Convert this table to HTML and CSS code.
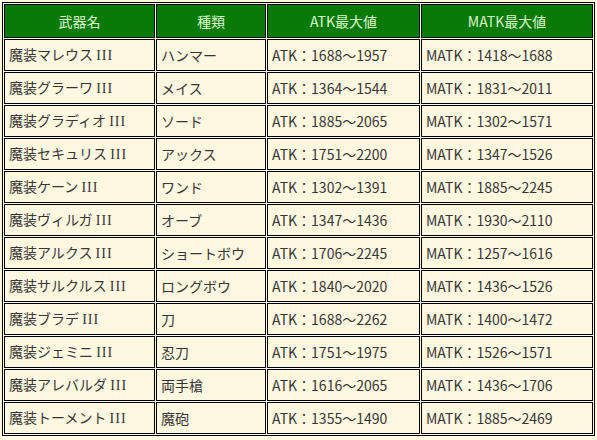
FILE: index.html
```html
<!DOCTYPE html>
<html lang="ja">
<head>
<meta charset="utf-8">
<link rel="stylesheet" href="styles.css">
</head>
<body>
<table class="weapons">
  <colgroup>
    <col class="c1"><col class="c2"><col class="c3"><col class="c4">
  </colgroup>
  <thead>
    <tr><th>武器名</th><th>種類</th><th>ATK最大値</th><th>MATK最大値</th></tr>
  </thead>
  <tbody>
    <tr><td>魔装マレウス <span class="roman">III</span></td><td>ハンマー</td><td>ATK：1688～1957</td><td>MATK：1418～1688</td></tr>
    <tr><td>魔装グラーワ <span class="roman">III</span></td><td>メイス</td><td>ATK：1364～1544</td><td>MATK：1831～2011</td></tr>
    <tr><td>魔装グラディオ <span class="roman">III</span></td><td>ソード</td><td>ATK：1885～2065</td><td>MATK：1302～1571</td></tr>
    <tr><td>魔装セキュリス <span class="roman">III</span></td><td>アックス</td><td>ATK：1751～2200</td><td>MATK：1347～1526</td></tr>
    <tr><td>魔装ケーン <span class="roman">III</span></td><td>ワンド</td><td>ATK：1302～1391</td><td>MATK：1885～2245</td></tr>
    <tr><td>魔装ヴィルガ <span class="roman">III</span></td><td>オーブ</td><td>ATK：1347～1436</td><td>MATK：1930～2110</td></tr>
    <tr><td>魔装アルクス <span class="roman">III</span></td><td>ショートボウ</td><td>ATK：1706～2245</td><td>MATK：1257～1616</td></tr>
    <tr><td>魔装サルクルス <span class="roman">III</span></td><td>ロングボウ</td><td>ATK：1840～2020</td><td>MATK：1436～1526</td></tr>
    <tr><td>魔装ブラデ <span class="roman">III</span></td><td>刀</td><td>ATK：1688～2262</td><td>MATK：1400～1472</td></tr>
    <tr><td>魔装ジェミニ <span class="roman">III</span></td><td>忍刀</td><td>ATK：1751～1975</td><td>MATK：1526～1571</td></tr>
    <tr><td>魔装アレバルダ <span class="roman">III</span></td><td>両手槍</td><td>ATK：1616～2065</td><td>MATK：1436～1706</td></tr>
    <tr><td>魔装トーメント <span class="roman">III</span></td><td>魔砲</td><td>ATK：1355～1490</td><td>MATK：1885～2469</td></tr>
  </tbody>
</table>
</body>
</html>
```
FILE: styles.css
```css
html, body {
  margin: 0;
  padding: 0;
  background: #fff9e4;
}
body {
  padding: 2px 0 0 2px;
  font-family: "Noto Sans CJK JP", "Noto Sans", sans-serif;
  font-size: 14px;
  color: #363636;
}
.weapons {
  table-layout: fixed;
  width: 593px;
  border: 1px solid #000;
  border-spacing: 1px;
  border-collapse: separate;
}
.weapons .c1 { width: 151px; }
.weapons .c2 { width: 110px; }
.weapons .c3 { width: 153px; }
.weapons .c4 { width: 172px; }
.weapons th,
.weapons td {
  border: 1px solid #000;
  padding: 0 4px;
  box-sizing: border-box;
  white-space: nowrap;
  overflow: hidden;
  line-height: 20px;
}
.weapons th {
  background: #087a08;
  color: #d8f7c8;
  font-weight: normal;
  height: 34px;
  text-align: center;
}
.weapons td {
  background: #fff8e1;
  height: 32px;
  text-align: left;
}
.roman {
  font-family: "Liberation Serif", serif;
  font-size: 14px;
  letter-spacing: 1px;
}
```
